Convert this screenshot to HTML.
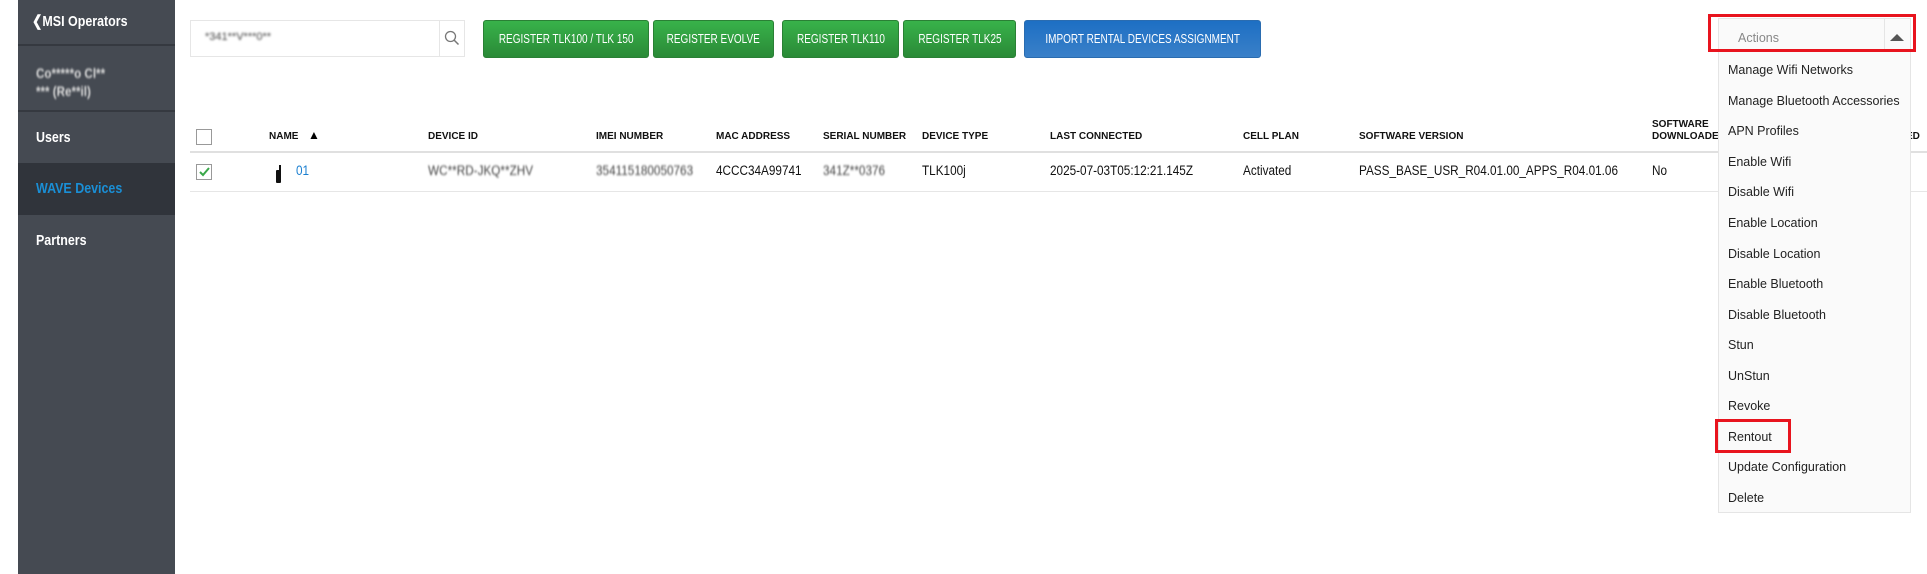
<!DOCTYPE html><html><head><style>
*{margin:0;padding:0;box-sizing:border-box}
body{width:1927px;height:574px;background:#fff;position:relative;overflow:hidden;font-family:"Liberation Sans",Arial,sans-serif}
.a{position:absolute;white-space:nowrap}
.sq{display:inline-block;transform-origin:left center}
#sb{position:absolute;left:18px;top:0;width:157px;height:574px;background:#454a52}
.sbt{position:absolute;left:18px;color:#fff;font-weight:bold;font-size:15px;white-space:nowrap;transform:scaleX(.83);transform-origin:left center}
.div{position:absolute;left:0;width:157px;height:2px;background:#353940}
.btn{position:absolute;top:20px;height:38px;border-radius:3px;color:#fff;font-size:12.5px;display:flex;align-items:center;justify-content:center;background:linear-gradient(#38b24a,#2a8a37);border:1px solid #2a8035;white-space:nowrap}
.btn span{display:inline-block;transform:scaleX(.8)}
.h{position:absolute;top:131px;font-size:10px;font-weight:bold;color:#111;white-space:nowrap}
.c{position:absolute;top:163px;font-size:13.5px;color:#111;white-space:nowrap;transform:scaleX(.87);transform-origin:left center}
.mi{position:absolute;left:1728px;font-size:12.5px;color:#222;white-space:nowrap}
.blur{filter:blur(1px);color:#444}
</style></head><body>
<div id="sb">
<div class="sbt" style="top:12px;left:14px">&#10094;MSI Operators</div>
<div class="div" style="top:44px"></div>
<div class="sbt blur" style="top:64px;color:#ddd;font-size:14px;line-height:18px">Co*****o Cl**<br>*** (Re**il)</div>
<div class="div" style="top:110px"></div>
<div class="sbt" style="top:129px">Users</div>
<div style="position:absolute;left:0;top:163px;width:157px;height:52px;background:#30343b"></div>
<div class="sbt" style="top:180px;color:#1a8fd6">WAVE Devices</div>
<div class="sbt" style="top:232px">Partners</div>
</div>
<div class="a" style="left:190px;top:20px;width:275px;height:37px;border:1px solid #e6e6e6"></div>
<div class="a" style="left:439px;top:20px;width:1px;height:37px;background:#e6e6e6"></div>
<svg class="a" style="left:444px;top:30px" width="16" height="16" viewBox="0 0 16 16"><circle cx="6.5" cy="6.5" r="5" fill="none" stroke="#777" stroke-width="1.3"/><path d="M10 10l4.5 4.5" stroke="#777" stroke-width="1.5"/></svg>
<div class="a blur" style="left:205px;top:31px;font-size:11px">*341**V***0**</div>
<div class="btn" style="left:483px;width:166px"><span>REGISTER TLK100 / TLK 150</span></div>
<div class="btn" style="left:653px;width:121px"><span>REGISTER EVOLVE</span></div>
<div class="btn" style="left:782px;width:117px"><span>REGISTER TLK110</span></div>
<div class="btn" style="left:903px;width:113px"><span>REGISTER TLK25</span></div>
<div class="btn" style="left:1024px;width:237px;background:linear-gradient(#1d6fc4,#3a80c8);border-color:#2a6cb0"><span>IMPORT RENTAL DEVICES ASSIGNMENT</span></div>
<div class="a" style="left:196px;top:129px;width:16px;height:16px;border:1px solid #999"></div>
<div class="h" style="left:269px">NAME</div>
<div class="a" style="left:308px;top:128px;font-size:12px">&#9650;</div>
<div class="h" style="left:428px">DEVICE ID</div>
<div class="h" style="left:596px">IMEI NUMBER</div>
<div class="h" style="left:716px">MAC ADDRESS</div>
<div class="h" style="left:823px">SERIAL NUMBER</div>
<div class="h" style="left:922px">DEVICE TYPE</div>
<div class="h" style="left:1050px">LAST CONNECTED</div>
<div class="h" style="left:1243px">CELL PLAN</div>
<div class="h" style="left:1359px">SOFTWARE VERSION</div>
<div class="h" style="left:1652px;top:119px;line-height:12px">SOFTWARE<br>DOWNLOADED</div>
<div class="h" style="left:1906px">ED</div>
<div class="a" style="left:190px;top:151px;width:1737px;height:2px;background:#e0e0e0"></div>
<div class="a" style="left:190px;top:191px;width:1737px;height:1px;background:#e6e6e6"></div>
<div class="a" style="left:196px;top:164px;width:16px;height:16px;border:1px solid #999"></div>
<svg class="a" style="left:199px;top:167px" width="11" height="10"><path d="M1 5l3 3 6-7" stroke="#3aa84a" stroke-width="2" fill="none"/></svg>
<div class="a" style="left:276px;top:170px;width:5px;height:13px;background:#111;border-radius:1px"></div>
<div class="a" style="left:279px;top:165px;width:1.5px;height:6px;background:#111"></div>
<div class="c" style="left:296px;color:#1a7fd0">01</div>
<div class="c blur" style="left:428px">WC**RD-JKQ**ZHV</div>
<div class="c blur" style="left:596px">354115180050763</div>
<div class="c" style="left:716px">4CCC34A99741</div>
<div class="c blur" style="left:823px">341Z**0376</div>
<div class="c" style="left:922px">TLK100j</div>
<div class="c" style="left:1050px">2025-07-03T05:12:21.145Z</div>
<div class="c" style="left:1243px">Activated</div>
<div class="c" style="left:1359px">PASS_BASE_USR_R04.01.00_APPS_R04.01.06</div>
<div class="c" style="left:1652px">No</div>
<div class="a" style="left:1718px;top:18px;width:193px;height:495px;background:#fafafa;border:1px solid #e5e5e5"></div>
<div class="a" style="left:1884px;top:18px;width:1px;height:31px;background:#e5e5e5"></div>
<div class="a" style="left:1738px;top:31px;font-size:12.5px;color:#888">Actions</div>
<svg class="a" style="left:1890px;top:33px" width="14" height="9"><path d="M0 8L7 1 14 8z" fill="#555"/></svg>
<div class="a" style="left:1708px;top:14px;width:208px;height:38px;border:3px solid #e8141e"></div>
<div class="mi" style="top:63px">Manage Wifi Networks</div>
<div class="mi" style="top:94px">Manage Bluetooth Accessories</div>
<div class="mi" style="top:124px">APN Profiles</div>
<div class="mi" style="top:155px">Enable Wifi</div>
<div class="mi" style="top:185px">Disable Wifi</div>
<div class="mi" style="top:216px">Enable Location</div>
<div class="mi" style="top:247px">Disable Location</div>
<div class="mi" style="top:277px">Enable Bluetooth</div>
<div class="mi" style="top:308px">Disable Bluetooth</div>
<div class="mi" style="top:338px">Stun</div>
<div class="mi" style="top:369px">UnStun</div>
<div class="mi" style="top:399px">Revoke</div>
<div class="mi" style="top:430px">Rentout</div>
<div class="mi" style="top:460px">Update Configuration</div>
<div class="mi" style="top:491px">Delete</div>
<div class="a" style="left:1715px;top:419px;width:76px;height:34px;border:3px solid #e8141e"></div>
</body></html>
